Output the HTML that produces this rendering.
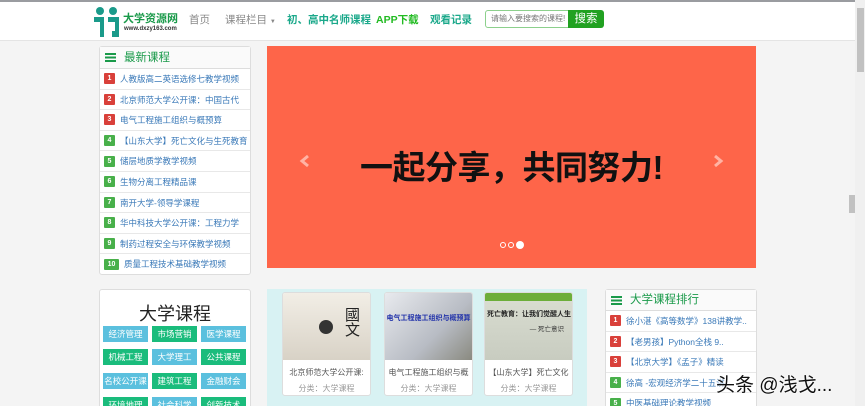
<!DOCTYPE html>
<html><head><meta charset="utf-8"><style>
*{margin:0;padding:0;box-sizing:border-box}
html,body{width:865px;height:406px;overflow:hidden}
body{background:#f4f4f4;font-family:"Liberation Sans","Noto Sans CJK SC",sans-serif;position:relative}
.abs{position:absolute}
.hdr{left:0;top:0;width:855px;height:41px;background:#fff;border-top:2px solid #9a9ca0;border-bottom:1px solid #e4e4e4}
.nav{font-size:10.5px;top:12px}
.panel{background:#fff;border:1px solid #ddd;border-radius:3px}
.ph{height:22px;border-bottom:1px solid #ddd;font-size:11.5px;color:#1a9a4a;line-height:22px;padding-left:24px;position:relative;background:#fafafa}
.ico{position:absolute;left:5px;top:6px;width:11px;height:9px;background:repeating-linear-gradient(#1a9a4a 0 2px,transparent 2px 3.5px)}
.it{height:20.6px;border-bottom:1px solid #e8e8e8;font-size:8.5px;color:#3a79b8;line-height:20px;padding-left:4px;white-space:nowrap;overflow:hidden}
.n{display:inline-block;width:11px;height:11px;line-height:11px;text-align:center;color:#fff;font-size:7px;font-weight:bold;margin-right:5px;border-radius:1px;vertical-align:middle;position:relative;top:-1px}
.r{background:#d9403a}.g{background:#48b04a}
.tag{position:absolute;width:45px;height:16px;font-size:8.5px;color:#fff;text-align:center;line-height:16px}
.b{background:#5bc0de}.gr{background:#1abc7c}
.card{position:absolute;top:292px;width:89px;height:104px;background:#fff;border-radius:3px;border:1px solid #ddd;overflow:hidden}
.card .im{height:67px;overflow:hidden;position:relative}
.card .t{font-size:8px;color:#555;text-align:center;margin-top:7px;white-space:nowrap;overflow:hidden}
.card .c{font-size:8px;color:#999;text-align:center;margin-top:5px}
</style></head><body>
<div class="abs hdr"></div>
<div class="abs" style="left:93px;top:5px;width:28px;height:33px">
<svg width="28" height="33"><circle cx="7" cy="6" r="4" fill="#1a9a8a"/><circle cx="20" cy="6" r="4" fill="#1a9a8a"/><path d="M1 12h10v20H7V17H1z M15 12h11v20h-7v-6h3V17h-7z" fill="#1a9a8a"/></svg></div>
<div class="abs" style="left:123px;top:10px;font-size:11px;font-weight:bold;color:#1a9a4a">大学资源网</div>
<div class="abs" style="left:124px;top:26px;font-size:6px;font-weight:bold;color:#333">www.dxzy163.com</div>
<div class="abs nav" style="left:189px;color:#888">首页</div>
<div class="abs nav" style="left:225px;color:#888">课程栏目 <span style="font-size:6px">▼</span></div>
<div class="abs nav" style="left:287px;color:#1aa88a;font-weight:bold">初、高中名师课程</div>
<div class="abs nav" style="left:376px;color:#22bb22;font-weight:bold">APP下载</div>
<div class="abs nav" style="left:430px;color:#1aa88a;font-weight:bold">观看记录</div>
<div class="abs" style="left:485px;top:10px;width:84px;height:18px;border:1px solid #8cd08c;border-radius:3px 0 0 3px;font-size:8px;color:#777;line-height:16px;padding-left:5px;background:#fff">请输入要搜索的课程!</div>
<div class="abs" style="left:568px;top:10px;width:36px;height:18px;background:#21a121;border-radius:0 3px 3px 0;color:#fff;font-size:11.5px;text-align:center;line-height:18px">搜索</div>

<div class="abs panel" style="left:99px;top:46px;width:152px;height:229px">
<div class="ph"><span class="ico"></span>最新课程</div>
<div class="it"><span class="n r">1</span>人教版高二英语选修七教学视频</div>
<div class="it"><span class="n r">2</span>北京师范大学公开课：中国古代</div>
<div class="it"><span class="n r">3</span>电气工程施工组织与概预算</div>
<div class="it"><span class="n g">4</span>【山东大学】死亡文化与生死教育</div>
<div class="it"><span class="n g">5</span>储层地质学教学视频</div>
<div class="it"><span class="n g">6</span>生物分离工程精品课</div>
<div class="it"><span class="n g">7</span>南开大学-领导学课程</div>
<div class="it"><span class="n g">8</span>华中科技大学公开课：工程力学</div>
<div class="it"><span class="n g">9</span>制药过程安全与环保教学视频</div>
<div class="it" style="border:none"><span class="n g" style="width:15px">10</span>质量工程技术基础教学视频</div>
</div>

<div class="abs" style="left:267px;top:46px;width:489px;height:222px;background:#fe6549"></div>
<div class="abs" style="left:267px;top:141px;width:489px;text-align:center;font-size:33px;font-weight:bold;color:#111;letter-spacing:-0.5px">一起分享，共同努力!</div>
<svg class="abs" style="left:299px;top:154px" width="12" height="14"><path d="M9 2L3 7l6 5" stroke="#ffb3a4" stroke-width="3" fill="none"/></svg>
<svg class="abs" style="left:712px;top:154px" width="12" height="14"><path d="M3 2l6 5-6 5" stroke="#ffb3a4" stroke-width="3" fill="none"/></svg>
<div class="abs" style="left:500px;top:242px;width:6px;height:6px;border:1px solid #fff;border-radius:50%"></div>
<div class="abs" style="left:508px;top:242px;width:6px;height:6px;border:1px solid #fff;border-radius:50%"></div>
<div class="abs" style="left:516px;top:241px;width:8px;height:8px;background:#fff;border-radius:50%"></div>

<div class="abs panel" style="left:99px;top:289px;width:152px;height:130px">
<div style="text-align:center;font-size:18px;color:#222;margin-top:10px">大学课程</div></div>
<div class="tag b" style="left:103px;top:326px">经济管理</div>
<div class="tag gr" style="left:152px;top:326px">市场营销</div>
<div class="tag b" style="left:201px;top:326px">医学课程</div>
<div class="tag gr" style="left:103px;top:349px">机械工程</div>
<div class="tag b" style="left:152px;top:349px">大学理工</div>
<div class="tag gr" style="left:201px;top:349px">公共课程</div>
<div class="tag b" style="left:103px;top:373px">名校公开课</div>
<div class="tag gr" style="left:152px;top:373px">建筑工程</div>
<div class="tag b" style="left:201px;top:373px">金融财会</div>
<div class="tag gr" style="left:103px;top:397px">环境地理</div>
<div class="tag b" style="left:152px;top:397px">社会科学</div>
<div class="tag gr" style="left:201px;top:397px">创新技术</div>

<div class="abs" style="left:267px;top:289px;width:320px;height:117px;background:#d8f2f3"></div>
<div class="card" style="left:282px"><div class="im" style="background:linear-gradient(#f2eee6,#d8d2c6)"><div style="position:absolute;left:36px;top:27px;width:14px;height:14px;border-radius:50%;background:#333"></div><div style="position:absolute;left:58px;top:14px;font-size:15px;color:#222;writing-mode:vertical-rl">國文</div></div><div class="t">北京师范大学公开课:</div><div class="c">分类：大学课程</div></div>
<div class="card" style="left:384px"><div class="im" style="background:linear-gradient(135deg,#e8eaee,#b8bcc4 60%,#8a8a80)"><div style="position:absolute;top:20px;width:100%;font-size:7px;color:#2233aa;font-weight:bold;text-align:center">电气工程施工组织与概预算</div></div><div class="t">电气工程施工组织与概</div><div class="c">分类：大学课程</div></div>
<div class="card" style="left:484px"><div class="im" style="background:linear-gradient(#6cae3a 0 8px,#d8dcd0 8px,#c8ccc0)"><div style="position:absolute;top:16px;left:2px;font-size:7px;font-weight:bold;color:#222;white-space:nowrap">死亡教育：让我们觉醒人生</div><div style="position:absolute;top:30px;right:8px;font-size:6.5px;color:#333">— 死亡意识</div></div><div class="t">【山东大学】死亡文化</div><div class="c">分类：大学课程</div></div>

<div class="abs panel" style="left:605px;top:289px;width:152px;height:130px">
<div class="ph" style="height:21px;line-height:21px"><span class="ico"></span>大学课程排行</div>
<div class="it"><span class="n r">1</span>徐小湛《高等数学》138讲教学..</div>
<div class="it"><span class="n r">2</span>【老男孩】Python全栈 9..</div>
<div class="it"><span class="n r">3</span>【北京大学】《孟子》精读</div>
<div class="it"><span class="n g">4</span>徐高 -宏观经济学二十五讲</div>
<div class="it"><span class="n g">5</span>中医基础理论教学视频</div>
</div>
<div class="abs" style="left:716px;top:370px;font-size:19px;color:#111;text-shadow:0 0 2px #fff,0 0 2px #fff">头条 @浅戈...</div>

<div class="abs" style="left:855px;top:0;width:10px;height:406px;background:#f0f0f0"></div>
<div class="abs" style="left:857px;top:8px;width:7px;height:64px;background:#c1c1c1"></div>
<div class="abs" style="left:849px;top:195px;width:6px;height:18px;background:#c1c1c1"></div>
</body></html>
